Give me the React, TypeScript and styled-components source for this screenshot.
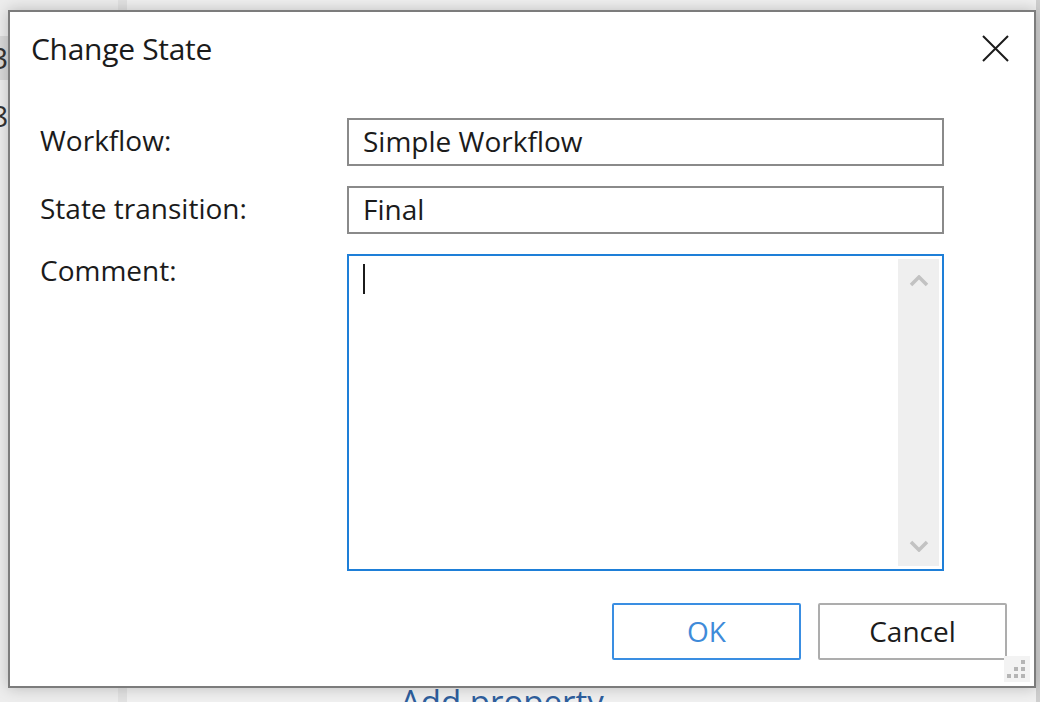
import React from 'react';
import styled, { createGlobalStyle } from 'styled-components';

const GlobalStyle = createGlobalStyle`
    html, body {
        margin: 0;
        padding: 0;
        height: 702px;
        overflow: hidden;
        background: #ececec;
        font-family: "Open Sans", "Noto Sans", "Liberation Sans", sans-serif;
    }
`;

const Page = styled.div`
    position: relative;
    width: 1040px;
    height: 702px;
    overflow: hidden;
    display: flex;
    background: #eeeeee;
`;

const SidePane = styled.div`
    width: 118px;
    flex-shrink: 0;
    display: flex;
    flex-direction: column;
    padding-top: 36px;
    border-right: 9px solid #e2e2e2;
    background: #ededed;
`;

const SideRow = styled.div<{ selected?: boolean }>`
    height: 44px;
    margin-bottom: 14px;
    text-indent: -9px;
    font-size: 30px;
    line-height: 44px;
    color: #333333;
    background: ${props => props.selected ? '#d9d9d9' : 'transparent'};
`;

const MainArea = styled.div`
    flex: 1;
    display: flex;
    flex-direction: column;
    justify-content: flex-end;
    padding-left: 273px;
    background: #f0f0f0;
    border-right: 4px solid #cfcfcf;
`;

const AddLink = styled.div`
    font-size: 33px;
    color: #2e5f9e;
    line-height: 1;
    margin-bottom: -16px;
`;

const Dialog = styled.div`
    position: absolute;
    left: 8px;
    top: 10px;
    width: 1024px;
    height: 674px;
    border: 2px solid #7c7c7c;
    background: #ffffff;
    box-shadow: 0 0 14px rgba(0, 0, 0, 0.22);
    display: flex;
    flex-direction: column;
    color: #1b1b1b;
`;

const TitleBar = styled.div`
    height: 76px;
    display: flex;
    align-items: center;
    justify-content: space-between;
    padding: 0 24px 0 21px;
`;

const Title = styled.div`
    font-size: 30px;
    letter-spacing: -0.3px;
    margin-top: -4px;
`;

const CloseButton = styled.div`
    width: 30px;
    height: 30px;
    display: flex;
    align-items: center;
    justify-content: center;
    margin-top: -4px;
`;

const Form = styled.div`
    margin-top: 30px;
    padding-left: 30px;
    display: grid;
    grid-template-columns: 307px 597px;
    grid-template-rows: 48px 48px 317px;
    row-gap: 20px;
`;

const Label = styled.div<{ top?: boolean }>`
    font-size: 28px;
    display: flex;
    align-items: ${props => props.top ? 'flex-start' : 'center'};
    line-height: 1.2;
    margin-top: ${props => props.top ? '0' : '-2px'};
`;

const Field = styled.div`
    box-sizing: border-box;
    border: 2px solid #8a8a8a;
    padding-left: 14px;
    font-size: 28px;
    display: flex;
    align-items: center;
    padding-bottom: 2px;
`;

const CommentBox = styled.div`
    box-sizing: border-box;
    border: 2px solid #1e7fd8;
    padding: 3px;
    display: flex;
`;

const CommentText = styled.div`
    flex: 1;
    padding: 5px 11px;
`;

const Caret = styled.div`
    width: 2px;
    height: 30px;
    background: #1b1b1b;
`;

const ScrollTrack = styled.div`
    width: 41px;
    background: #efefef;
    display: flex;
    flex-direction: column;
    justify-content: space-between;
    align-items: center;
    padding: 16px 0 14px;
`;

const Footer = styled.div`
    margin-top: 32px;
    display: flex;
    justify-content: flex-end;
    gap: 17px;
    padding-right: 27px;
`;

const Button = styled.div<{ primary?: boolean }>`
    box-sizing: border-box;
    width: 189px;
    height: 57px;
    border: 2px solid ${props => props.primary ? '#3a8ee2' : '#adadad'};
    border-radius: 2px;
    color: ${props => props.primary ? '#3f8bd9' : '#1b1b1b'};
    font-size: 28px;
    display: flex;
    align-items: center;
    justify-content: center;
    padding-bottom: 2px;
`;

const Grip = styled.div`
    position: absolute;
    right: 4px;
    bottom: 4px;
    width: 26px;
    height: 26px;
    background: #f3f3f3;
`;

const App = () => {
    return (
        <>
            <GlobalStyle />
            <Page>
                <SidePane>
                    <SideRow selected>3</SideRow>
                    <SideRow>8</SideRow>
                </SidePane>
                <MainArea>
                    <AddLink>Add property</AddLink>
                </MainArea>

                <Dialog>
                    <TitleBar>
                        <Title>Change State</Title>
                        <CloseButton>
                            <svg width="27" height="27" viewBox="0 0 27 27">
                                <path d="M1 1 L26 26 M26 1 L1 26" stroke="#1b1b1b" strokeWidth="2" />
                            </svg>
                        </CloseButton>
                    </TitleBar>

                    <Form>
                        <Label>Workflow:</Label>
                        <Field>Simple Workflow</Field>
                        <Label>State transition:</Label>
                        <Field>Final</Field>
                        <Label top>Comment:</Label>
                        <CommentBox>
                            <CommentText>
                                <Caret />
                            </CommentText>
                            <ScrollTrack>
                                <svg width="20" height="12" viewBox="0 0 20 12">
                                    <path d="M2 10 L10 2 L18 10" stroke="#c2c2c2" strokeWidth="3.5" fill="none" />
                                </svg>
                                <svg width="20" height="12" viewBox="0 0 20 12">
                                    <path d="M2 2 L10 10 L18 2" stroke="#c2c2c2" strokeWidth="3.5" fill="none" />
                                </svg>
                            </ScrollTrack>
                        </CommentBox>
                    </Form>

                    <Footer>
                        <Button primary>OK</Button>
                        <Button>Cancel</Button>
                    </Footer>

                    <Grip>
                        <svg width="26" height="26" viewBox="0 0 26 26">
                            <rect x="17" y="4" width="4" height="4" fill="#b5b5b5" />
                            <rect x="10" y="11" width="4" height="4" fill="#b5b5b5" />
                            <rect x="17" y="11" width="4" height="4" fill="#b5b5b5" />
                            <rect x="3" y="18" width="4" height="4" fill="#b5b5b5" />
                            <rect x="10" y="18" width="4" height="4" fill="#b5b5b5" />
                            <rect x="17" y="18" width="4" height="4" fill="#b5b5b5" />
                        </svg>
                    </Grip>
                </Dialog>
            </Page>
        </>
    );
}

export default App;
